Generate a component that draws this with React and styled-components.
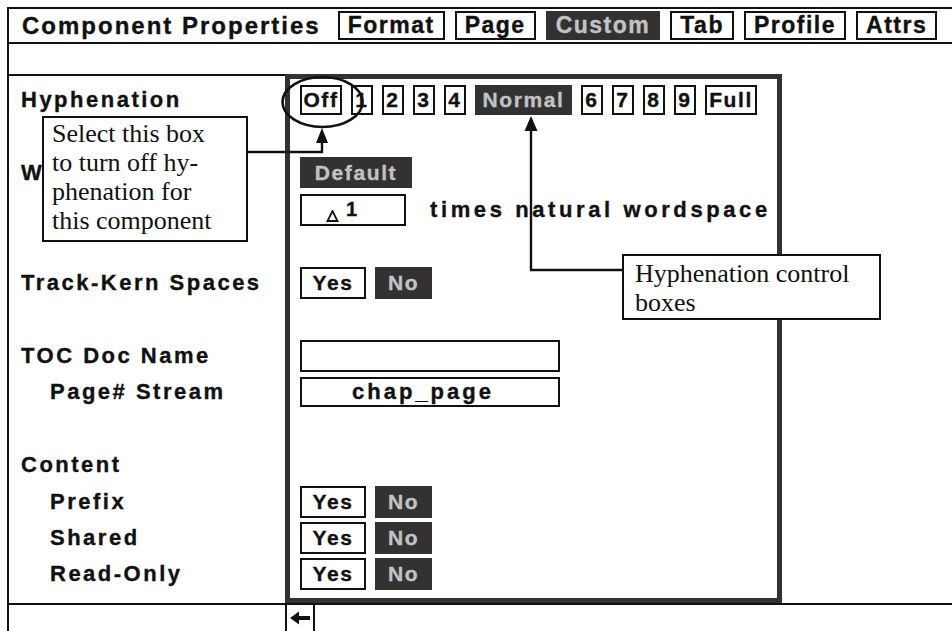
import React from 'react';
import styled, { createGlobalStyle } from 'styled-components';

const INK = '#111';
const DARK = '#323232';
const DARK_TEXT = '#c2c2c2';
const SANS = `"Liberation Sans", Arial, sans-serif`;
const SERIF = `"Liberation Serif", "Times New Roman", serif`;

const Global = createGlobalStyle`
  html, body { margin: 0; padding: 0; background: #fff; overflow: hidden; }
  body { font-family: ${SANS}; color: ${INK}; }
`;

const Page = styled.div`
  position: relative;
  width: 952px;
  height: 631px;
  overflow: hidden;
  background: #fff;
`;

const Frame = styled.div`
  margin: 7px 0 0 7px;
  height: 624px;
  box-sizing: border-box;
  border-top: 2px solid ${INK};
  border-left: 2px solid ${INK};
  display: flex;
  flex-direction: column;
`;

const TitleBar = styled.div`
  height: 33px;
  flex: none;
  border-bottom: 2px solid ${INK};
  display: flex;
  align-items: center;
  padding-left: 13px;
`;

const Title = styled.div`
  font-weight: bold;
  font-size: 24px;
  letter-spacing: 2px;
  -webkit-text-stroke: 0.35px ${INK};
  margin-right: 17px;
  white-space: nowrap;
`;

const TabRow = styled.div`
  display: flex;
  gap: 10px;
`;

const Tab = styled.div`
  height: 29px;
  box-sizing: border-box;
  border: 2px solid ${(p) => (p.$active ? DARK : INK)};
  background: ${(p) => (p.$active ? DARK : '#fff')};
  color: ${(p) => (p.$active ? DARK_TEXT : INK)};
  padding: 0 8px;
  display: flex;
  align-items: center;
  font-weight: bold;
  font-size: 23px;
  letter-spacing: 1.5px;
  -webkit-text-stroke: 0.35px currentColor;
  white-space: nowrap;
`;

const Band = styled.div`
  height: 30px;
  flex: none;
`;

const Body = styled.div`
  height: 529px;
  flex: none;
  display: grid;
  grid-template-columns: 276px 497px 1fr;
  grid-template-rows: 10px 32px 41px 31px 6px 32px 40px 33px 41px 32px 5px 30px 43px 30px 6px 32px 4px 32px 4px 32px 1fr;
`;

const LabelPane = styled.div`
  grid-column: 1;
  grid-row: 1 / -1;
  border-top: 2px solid ${INK};
`;

const PanelFrame = styled.div`
  grid-column: 2;
  grid-row: 1 / -1;
  border: 5px solid ${DARK};
`;

const Label = styled.div`
  grid-column: 1;
  grid-row: ${(p) => p.$row};
  align-self: center;
  justify-self: start;
  margin-left: ${(p) => (p.$indent ? 41 : 12)}px;
  max-width: ${(p) => (p.$clip ? `${p.$clip}px` : 'none')};
  overflow: hidden;
  font-weight: bold;
  font-size: 22px;
  letter-spacing: 2.5px;
  -webkit-text-stroke: 0.35px ${INK};
  white-space: nowrap;
  z-index: 1;
`;

const Controls = styled.div`
  grid-column: 2;
  grid-row: ${(p) => p.$row};
  display: flex;
  align-items: center;
  gap: 9px;
  padding-left: 15px;
  z-index: 1;
`;

const Box = styled.div`
  width: ${(p) => p.$w}px;
  height: ${(p) => p.$h || 30}px;
  box-sizing: border-box;
  border: 2px solid ${(p) => (p.$dark ? DARK : INK)};
  background: ${(p) => (p.$dark ? DARK : '#fff')};
  color: ${(p) => (p.$dark ? DARK_TEXT : INK)};
  display: flex;
  align-items: center;
  justify-content: center;
  font-weight: bold;
  font-size: 21px;
  letter-spacing: 1.6px;
  -webkit-text-stroke: 0.35px currentColor;
  white-space: nowrap;
  flex: none;
`;

const Field = styled.div`
  width: ${(p) => p.$w}px;
  height: ${(p) => p.$h}px;
  box-sizing: border-box;
  border: 2px solid ${INK};
  background: #fff;
  display: flex;
  align-items: center;
  justify-content: ${(p) => (p.$center ? 'center' : 'flex-start')};
  padding-left: ${(p) => (p.$center ? 0 : 24)}px;
  padding-right: ${(p) => (p.$center ? 14 : 0)}px;
  font-weight: bold;
  font-size: 22px;
  letter-spacing: 3px;
  -webkit-text-stroke: 0.35px ${INK};
  flex: none;
`;

const CaretValue = styled.span`
  display: flex;
  align-items: flex-start;
  height: 100%;
  padding-top: 3px;
  box-sizing: border-box;
  font-size: 20px;
  line-height: 20px;
  letter-spacing: 0;
`;

const Caret = styled.svg`
  align-self: flex-end;
  margin-bottom: 2px;
  margin-right: 7px;
`;

const Phrase = styled.span`
  margin-left: 15px;
  font-weight: bold;
  font-size: 22px;
  letter-spacing: 3.6px;
  -webkit-text-stroke: 0.35px ${INK};
  white-space: nowrap;
`;

const StatusBar = styled.div`
  flex: 1;
  border-top: 2px solid ${INK};
  display: flex;
`;

const StatusCell = styled.div`
  width: 276px;
  flex: none;
`;

const ArrowCell = styled.div`
  width: 30px;
  flex: none;
  box-sizing: border-box;
  border-left: 2px solid ${INK};
  border-right: 2px solid ${INK};
  display: flex;
  align-items: center;
  justify-content: center;
`;

const Overlay = styled.svg`
  position: absolute;
  left: 0;
  top: 0;
  pointer-events: none;
  z-index: 5;
`;

const Callout = styled.div`
  position: absolute;
  left: ${(p) => p.$x}px;
  top: ${(p) => p.$y}px;
  width: ${(p) => p.$w}px;
  height: ${(p) => p.$h}px;
  box-sizing: border-box;
  border: 2px solid ${INK};
  background: #fff;
  padding: ${(p) => p.$pt}px 0 0 ${(p) => p.$pl}px;
  font-family: ${SERIF};
  font-size: 26px;
  line-height: 29px;
  color: ${INK};
  z-index: 6;
`;

const levels = ['1', '2', '3', '4'];
const levels2 = ['6', '7', '8', '9'];

function YesNo({ row }) {
  return (
    <Controls $row={row}>
      <Box $w={66} $h={32}>Yes</Box>
      <Box $w={57} $h={32} $dark>No</Box>
    </Controls>
  );
}

export default function App() {
  return (
    <Page>
      <Global />
      <Frame>
        <TitleBar>
          <Title>Component Properties</Title>
          <TabRow>
            <Tab>Format</Tab>
            <Tab>Page</Tab>
            <Tab $active>Custom</Tab>
            <Tab>Tab</Tab>
            <Tab>Profile</Tab>
            <Tab>Attrs</Tab>
          </TabRow>
        </TitleBar>
        <Band />
        <Body>
          <LabelPane />
          <PanelFrame />

          <Label $row={2}>Hyphenation</Label>
          <Controls $row={2}>
            <Box $w={42}>Off</Box>
            {levels.map((n) => (
              <Box key={n} $w={22}>{n}</Box>
            ))}
            <Box $w={97} $dark>Normal</Box>
            {levels2.map((n) => (
              <Box key={n} $w={22}>{n}</Box>
            ))}
            <Box $w={52}>Full</Box>
          </Controls>

          <Label $row={4} $clip={21}>Wordspace</Label>
          <Controls $row={4}>
            <Box $w={112} $h={31} $dark>Default</Box>
          </Controls>
          <Controls $row={6}>
            <Field $w={106} $h={32}>
              <Caret width="13" height="12" viewBox="0 0 13 12">
                <path d="M6.5 1 L1.5 11 L11.5 11 Z" fill="#fff" stroke={INK} strokeWidth="1.8" />
              </Caret>
              <CaretValue>1</CaretValue>
            </Field>
            <Phrase>times natural wordspace</Phrase>
          </Controls>

          <Label $row={8}>Track-Kern Spaces</Label>
          <YesNo row={8} />

          <Label $row={10}>TOC Doc Name</Label>
          <Controls $row={10}>
            <Field $w={260} $h={32} $center />
          </Controls>
          <Label $row={12} $indent>Page# Stream</Label>
          <Controls $row={12}>
            <Field $w={260} $h={30} $center>chap_page</Field>
          </Controls>

          <Label $row={14}>Content</Label>
          <Label $row={16} $indent>Prefix</Label>
          <YesNo row={16} />
          <Label $row={18} $indent>Shared</Label>
          <YesNo row={18} />
          <Label $row={20} $indent>Read-Only</Label>
          <YesNo row={20} />
        </Body>
        <StatusBar>
          <StatusCell />
          <ArrowCell>
            <svg width="22" height="14" viewBox="0 0 22 14">
              <path d="M1 7 L10 0.5 L10 5 L21 5 L21 9 L10 9 L10 13.5 Z" fill={INK} />
            </svg>
          </ArrowCell>
        </StatusBar>
      </Frame>

      <Overlay width="952" height="631" viewBox="0 0 952 631">
        <ellipse cx="322.5" cy="102" rx="40" ry="25" fill="none" stroke={INK} strokeWidth="2.6" />
        <polyline points="248,152 322,152 322,140" fill="none" stroke={INK} strokeWidth="2.4" />
        <polygon points="322,128 316,143 328,143" fill={INK} />
        <polyline points="622,270 531,270 531,128" fill="none" stroke={INK} strokeWidth="2.4" />
        <polygon points="531,116 524.5,131 537.5,131" fill={INK} />
      </Overlay>

      <Callout $x={42} $y={116} $w={206} $h={126} $pt={1} $pl={8}>
        Select this box
        <br />
        to turn off hy-
        <br />
        phenation for
        <br />
        this component
      </Callout>
      <Callout $x={622} $y={254} $w={259} $h={66} $pt={3} $pl={11}>
        Hyphenation control
        <br />
        boxes
      </Callout>
    </Page>
  );
}
